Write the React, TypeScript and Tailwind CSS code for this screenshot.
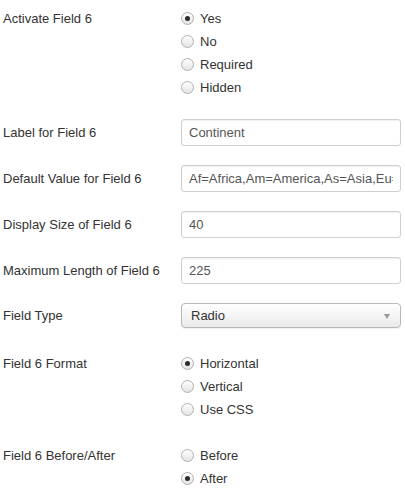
const font = { fontFamily: '"Liberation Sans", Arial, sans-serif' };

const Radio = ({ label, checked }: { label: string; checked?: boolean }) => (
  <label className="flex items-center h-[23px] gap-[6px] text-[13px] text-[#333]">
    <span className="w-[13px] h-[13px] rounded-full border border-[#b0b0b0] bg-gradient-to-b from-white to-[#e4e4e4] flex items-center justify-center">
      {checked && <span className="w-[5px] h-[5px] rounded-full bg-[#2b2b2b]" />}
    </span>
    <span>{label}</span>
  </label>
);

const Label = ({ children }: { children: React.ReactNode }) => (
  <div className="w-[178px] shrink-0 text-[13px] text-[#333]">{children}</div>
);

const TextInput = ({ value }: { value: string }) => (
  <input
    readOnly
    value={value}
    style={font}
    className="w-[220px] h-[27px] rounded-[3px] border border-[#cfcfcf] px-[7px] text-[13px] text-[#555] outline-none shadow-[inset_0_1px_1px_rgba(0,0,0,0.06)]"
  />
);

const App = () => {
  return (
    <div style={font} className="w-[405px] h-[500px] bg-white pl-[3px] overflow-hidden">
      {/* Activate */}
      <div className="flex pt-[7px]">
        <div className="w-[178px] shrink-0 h-[23px] flex items-center text-[13px] text-[#333]">
          Activate Field 6
        </div>
        <div className="flex flex-col">
          <Radio label="Yes" checked />
          <Radio label="No" />
          <Radio label="Required" />
          <Radio label="Hidden" />
        </div>
      </div>

      {/* Text inputs */}
      <div className="flex flex-col gap-[19px] mt-[20px]">
        {[
          ["Label for Field 6", "Continent"],
          ["Default Value for Field 6", "Af=Africa,Am=America,As=Asia,Eu=Europe"],
          ["Display Size of Field 6", "40"],
          ["Maximum Length of Field 6", "225"],
        ].map(([l, v]) => (
          <div key={l} className="flex items-center">
            <Label>{l}</Label>
            <TextInput value={v} />
          </div>
        ))}
      </div>

      {/* Field type select */}
      <div className="flex items-center mt-[19px]">
        <Label>Field Type</Label>
        <div className="relative w-[220px] h-[25px] rounded-[4px] border border-[#b8b8b8] bg-gradient-to-b from-white to-[#eaeaea] flex items-center px-[9px] text-[13px] text-[#333] shadow-[0_1px_1px_rgba(0,0,0,0.06)]">
          Radio
          <span className="absolute right-[10px] top-[10px] w-0 h-0 border-l-[3.5px] border-r-[3.5px] border-t-[5px] border-l-transparent border-r-transparent border-t-[#999]" />
        </div>
      </div>

      {/* Format */}
      <div className="flex mt-[24px]">
        <div className="w-[178px] shrink-0 h-[23px] flex items-center text-[13px] text-[#333]">
          Field 6 Format
        </div>
        <div className="flex flex-col">
          <Radio label="Horizontal" checked />
          <Radio label="Vertical" />
          <Radio label="Use CSS" />
        </div>
      </div>

      {/* Before / After */}
      <div className="flex mt-[23px]">
        <div className="w-[178px] shrink-0 h-[23px] flex items-center text-[13px] text-[#333]">
          Field 6 Before/After
        </div>
        <div className="flex flex-col">
          <Radio label="Before" />
          <Radio label="After" checked />
        </div>
      </div>
    </div>
  );
};

export default App;
